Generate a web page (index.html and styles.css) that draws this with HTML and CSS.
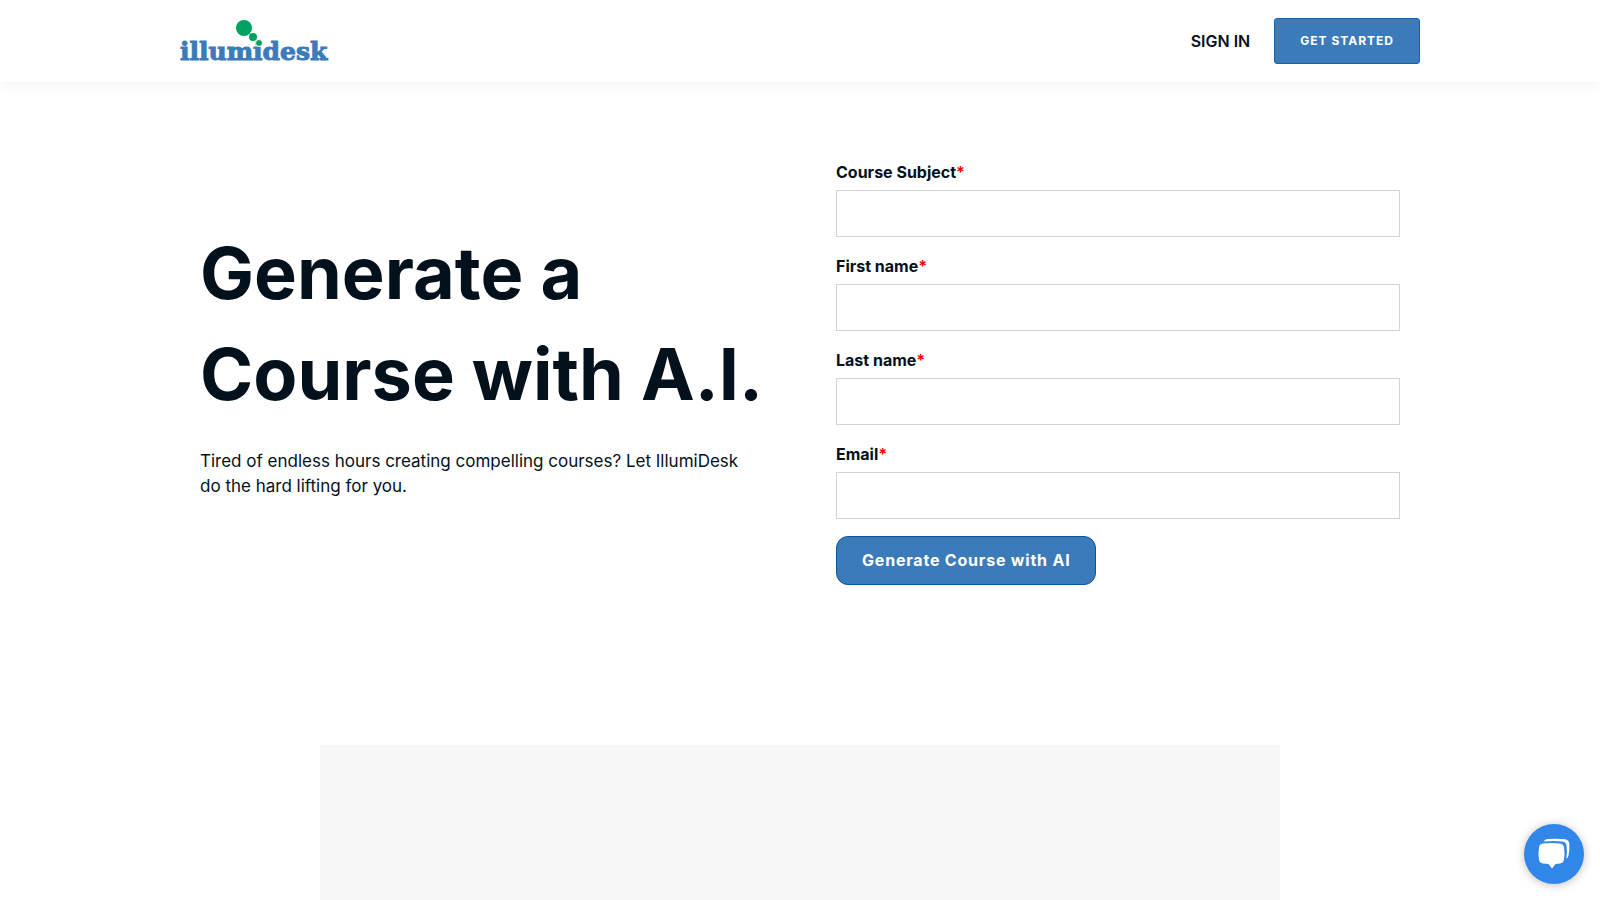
FILE: index.html
```html
<!DOCTYPE html>
<html lang="en">
<head>
  <meta charset="UTF-8">
  <meta name="viewport" content="width=device-width, initial-scale=1.0">
  <title>Generate a Course with A.I. - IllumiDesk</title>
  <link rel="stylesheet" href="styles.css">
</head>
<body>

  <header class="header">
    <div class="header-inner">
      <a href="#" class="logo" aria-label="IllumiDesk home">
        <svg width="148" height="44" viewBox="0 0 148 44">
          <text class="logo-text" x="0" y="41">illumidesk</text>
          <circle class="logo-dot" cx="79" cy="24" r="3.500"/>
          <circle cx="73" cy="18" r="4"/>
          <circle cx="64" cy="9" r="8"/>
        </svg>
      </a>
      <nav class="nav">
        <a href="#" class="sign-in">SIGN IN</a>
        <a href="#" class="get-started">GET STARTED</a>
      </nav>
    </div>
  </header>

  <main>
    <section class="hero">
      <div class="intro">
        <h1>Generate a Course with A.I.</h1>
        <p>Tired of endless hours creating compelling courses? Let IllumiDesk do the hard lifting for you.</p>
      </div>

      <form class="course-form">
        <div class="field">
          <label for="subject">Course Subject<span class="required">*</span></label>
          <input type="text" id="subject" name="subject" required>
        </div>
        <div class="field">
          <label for="firstname">First name<span class="required">*</span></label>
          <input type="text" id="firstname" name="firstname" required>
        </div>
        <div class="field">
          <label for="lastname">Last name<span class="required">*</span></label>
          <input type="text" id="lastname" name="lastname" required>
        </div>
        <div class="field">
          <label for="email">Email<span class="required">*</span></label>
          <input type="email" id="email" name="email" required>
        </div>
        <button type="submit" class="submit">Generate Course with AI</button>
      </form>
    </section>

    <section class="video"></section>
  </main>

  <button type="button" class="chat" aria-label="Open chat">
    <svg width="32" height="32" viewBox="0 0 32 32" fill="#fff">
      <path d="M6 3.500 Q6.500 1.200 10 1 Q19 0.300 27 1.300 Q31 1.800 31.300 6 Q31.800 12 30.500 17.500 Q30 20 28.300 20.500 Q29.500 13 28.500 7.500 Q28 4 24.500 3.500 Q15 2.300 6 3.500z"/>
      <path d="M5 5.600 Q13.500 4.400 22 5.600 Q25.500 6 26 9.500 Q27 15.500 26 21.500 Q25.500 25 22 25.500 L17.500 26 L14 30.500 L10.500 26 L5 25.500 Q1.500 25 1 21.500 Q0 15.500 1 9.500 Q1.500 6 5 5.600z"/>
    </svg>
  </button>

</body>
</html>
```
FILE: styles.css
```css
* {
  box-sizing: border-box;
}
body {
  margin: 0;
  background: #fff;
  font-family: Inter, "Liberation Sans", sans-serif;
  font-size: 17px;
  line-height: 25px;
  color: #03111d;
}
a {
  text-decoration: none;
  color: inherit;
}

/* header */
.header {
  background: #fff;
  box-shadow: 0 0 16px rgba(0, 0, 0, 0.08);
}
.header-inner {
  max-width: 1240px;
  min-height: 82px;
  margin: 0 auto;
  display: flex;
  align-items: center;
  justify-content: space-between;
}
.logo svg {
  display: block;
  fill: #00a160;
  overflow: visible;
}
.logo-text {
  font-family: "DejaVu Serif", serif;
  font-size: 25px;
  font-weight: bold;
  fill: #3c7bba;
  stroke: #3c7bba;
  stroke-width: 1px;
}
.logo-dot {
  stroke: #fff;
  stroke-width: 1px;
}
.nav {
  display: flex;
  align-items: center;
  gap: 24px;
}
.sign-in {
  font-size: 16px;
  font-weight: 600;
}
.get-started {
  padding: 12px 25px;
  border: 1px solid #1763ab;
  border-radius: 3px;
  background: #3c7bba;
  color: #fff;
  font-size: 12px;
  line-height: 20px;
  font-weight: 700;
  letter-spacing: 1px;
}

/* hero */
.hero {
  max-width: 1240px;
  margin: 0 auto;
  padding: 78px 20px 160px;
  display: grid;
  grid-template-columns: 1fr 1fr;
  gap: 72px;
  align-items: center;
}
.intro {
  padding-bottom: 25px;
}
h1 {
  margin: 0 0 25px;
  font-size: 72px;
  line-height: 101px;
  font-weight: 700;
}
p {
  margin: 0;
  padding-right: 12px;
}
.field {
  margin-bottom: 17px;
}
label {
  display: block;
  margin-bottom: 6px;
  font-size: 16px;
  line-height: 24px;
  font-weight: 700;
}
.required {
  color: #f00;
}
input {
  display: block;
  width: 100%;
  height: 47px;
  padding: 10px;
  border: 1px solid #d3d3d3;
  background: #fff;
  font: inherit;
}
.submit {
  padding: 12px 25px;
  border: 1px solid #0d549b;
  border-radius: 12px;
  background: #3c7bba;
  color: #fff;
  font-family: inherit;
  font-size: 16px;
  line-height: 23px;
  font-weight: 700;
  letter-spacing: 0.05em;
  cursor: pointer;
}

.video {
  width: 60%;
  height: 540px;
  margin: 0 auto;
  background: #f7f7f7;
}

/* chat bubble */
.chat {
  position: fixed;
  right: 16px;
  bottom: 16px;
  width: 60px;
  height: 60px;
  padding: 0;
  display: flex;
  align-items: center;
  justify-content: center;
  border: none;
  border-radius: 50%;
  background: #3087e7;
  box-shadow: 0 1px 10px rgba(0, 0, 0, 0.25);
  cursor: pointer;
}
```
